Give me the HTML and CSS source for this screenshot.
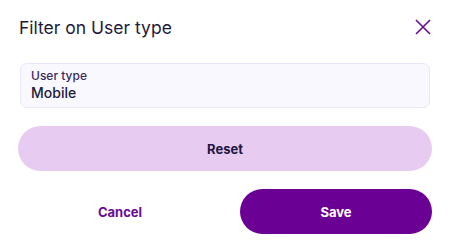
FILE: index.html
```html
<!DOCTYPE html>
<html>
<head>
    <title>Filter on User type</title>
    <link rel="stylesheet" href="styles.css">
</head>
<body>
    <div class="dialog">
        <div class="header">
            <div class="title">Filter on User type</div>
            <button class="close" aria-label="Close">
                <svg width="16" height="16" viewBox="0 0 16 16">
                    <path d="M1 1L15 15M15 1L1 15" stroke="#6a0a94" stroke-width="1.6" fill="none"/>
                </svg>
            </button>
        </div>

        <div class="field">
            <div class="field-label">User type</div>
            <div class="field-value">Mobile</div>
        </div>

        <button class="btn btn-reset">Reset</button>

        <div class="actions">
            <button class="btn btn-cancel">Cancel</button>
            <button class="btn btn-save">Save</button>
        </div>
    </div>
</body>
</html>
```

FILE: styles.css
```css
body {
    font-family: Inter, "Noto Sans", sans-serif;
    margin: 0;
    padding: 0;
    background-color: #ffffff;
    color: #1e1a3c;
}
.dialog {
    width: 450px;
    height: 252px;
    padding: 14px 18px 0 18px;
    box-sizing: border-box;
}
.header {
    display: flex;
    justify-content: space-between;
    align-items: center;
    height: 26px;
    padding-left: 1px;
}
.title {
    font-size: 17.5px;
    color: #1e1a3c;
}
.close {
    background: none;
    border: none;
    padding: 0;
    margin-right: 1px;
    width: 16px;
    height: 16px;
    cursor: pointer;
}
.field {
    margin: 23px 2px 0 2px;
    height: 45px;
    box-sizing: border-box;
    padding: 4px 10px;
    background-color: #f8f8fe;
    border: 1px solid #ebe7fa;
    border-radius: 7px;
}
.field-label {
    font-size: 12px;
    font-weight: 500;
    color: #3b2a5e;
    line-height: 15px;
}
.field-value {
    font-size: 14px;
    font-weight: 500;
    color: #1e1a3c;
    line-height: 19px;
}
.btn {
    display: block;
    height: 45px;
    border: none;
    border-radius: 23px;
    font-family: Inter, "Noto Sans", sans-serif;
    font-size: 13px;
    font-weight: 700;
    cursor: pointer;
}
.btn-reset {
    width: 100%;
    margin-top: 18px;
    background-color: #e7cbf1;
    color: #23173f;
}
.actions {
    display: grid;
    grid-template-columns: 1fr 192px;
    gap: 18px;
    margin-top: 18px;
}
.btn-cancel {
    background: none;
    color: #6a0a94;
}
.btn-save {
    background-color: #6a0094;
    color: #ffffff;
}
```
